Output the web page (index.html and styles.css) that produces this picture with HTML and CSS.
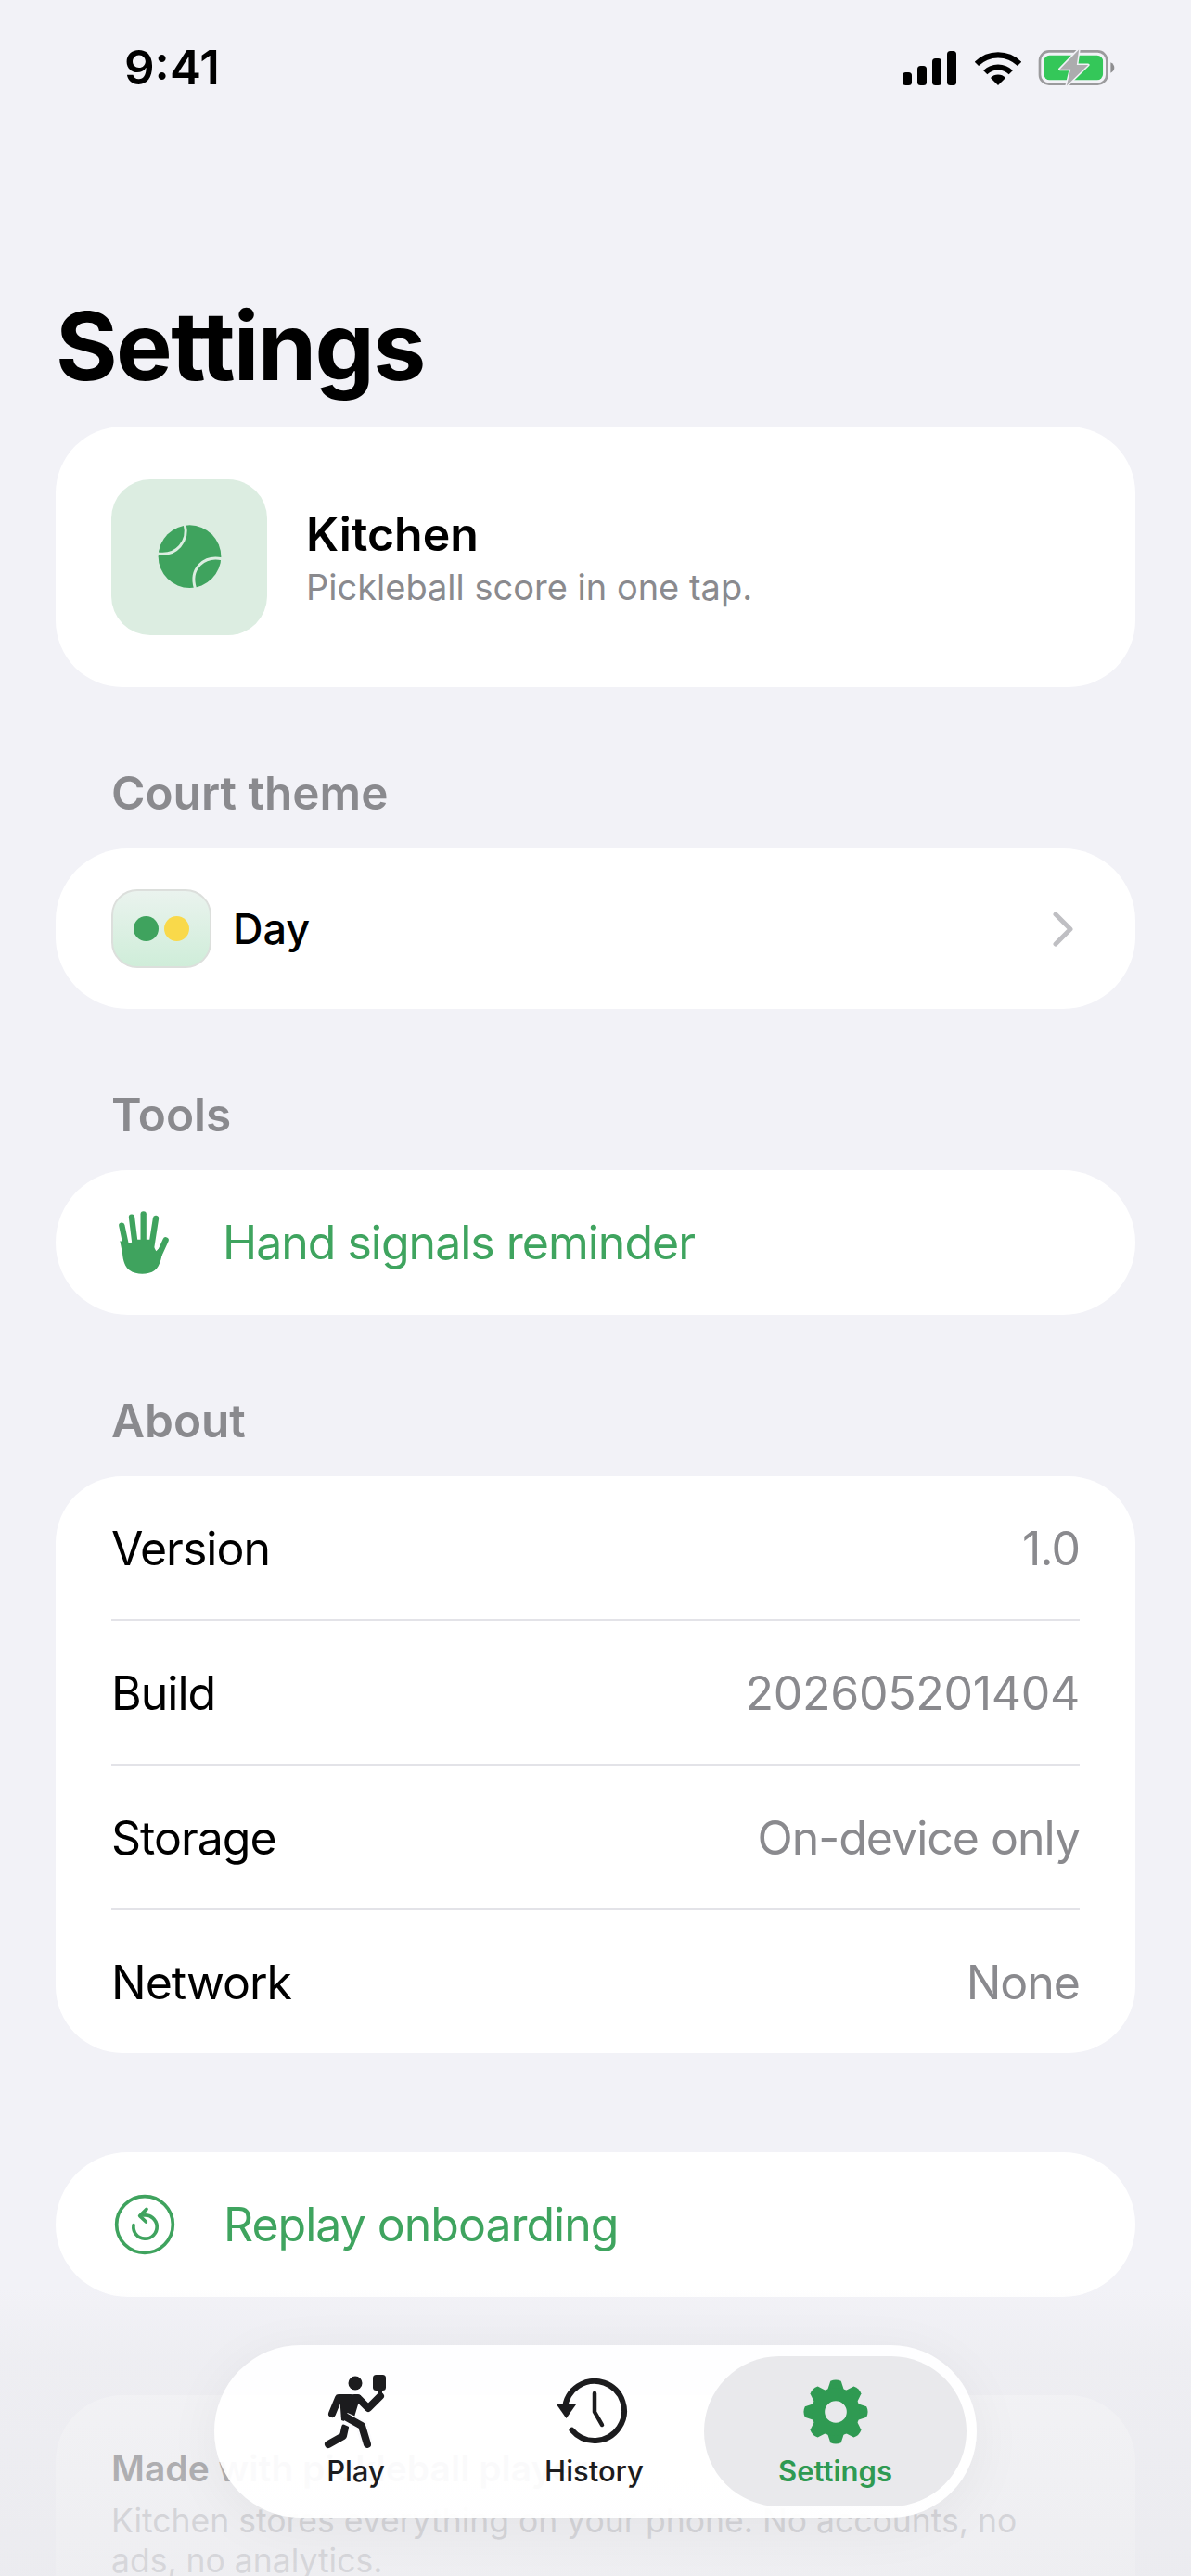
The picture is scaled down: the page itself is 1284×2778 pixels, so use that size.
FILE: index.html
```html
<!DOCTYPE html>
<html lang="en">
  <head>
    <meta charset="UTF-8" />
    <meta name="viewport" content="width=device-width, initial-scale=1.0" />
    <title>Settings</title>
    <link rel="stylesheet" href="styles.css">
  </head>
  <body>
    <div class="screen">
      <!-- Status bar -->
      <div class="status-bar">
        <span class="time">9:41</span>
        <div class="status-icons">
          <svg class="signal" viewBox="0 0 58 37" width="58" height="37">
            <rect x="0" y="23" width="10" height="14" rx="3.5" />
            <rect x="16" y="16" width="10" height="21" rx="3.5" />
            <rect x="32" y="8" width="10" height="29" rx="3.5" />
            <rect x="48" y="0" width="10" height="37" rx="3.5" />
          </svg>
          <svg class="wifi" viewBox="332 72 148 110" width="50" height="37">
            <path d="M337.4 113.4A97 97 0 0 1 474.6 113.4" fill="none" stroke="#000" stroke-width="18" />
            <path d="M365 141A58 58 0 0 1 447 141" fill="none" stroke="#000" stroke-width="18" />
            <path d="M406 182L382 158A34 34 0 0 1 430 158Z" />
          </svg>
          <svg class="battery" viewBox="539 64 250 126" width="83" height="42">
            <rect x="545" y="74" width="218" height="106" rx="30" fill="none" stroke="#9b9b9d" stroke-width="8" />
            <rect x="558" y="87" width="192" height="80" rx="19" fill="#34c759" />
            <path d="M775 110C783 114 787 120 787 127C787 134 783 140 775 144Z" fill="#8e8e90" />
            <path d="M672 68L610 132H645L632 186L702 118H665Z" fill="#acacae" stroke="#f2f2f7" stroke-width="9" stroke-linejoin="round" paint-order="stroke" />
          </svg>
        </div>
      </div>

      <h1 class="page-title">Settings</h1>

      <div class="card app-card">
        <div class="app-icon">
          <svg viewBox="385 376 214 214" width="71" height="71">
            <circle cx="492" cy="482" r="102" fill="#3fa35e" />
            <path d="M476 378C490 430 450 482 388 472" fill="none" stroke="#dcede1" stroke-width="9" />
            <path d="M597 490C540 478 490 520 510 586" fill="none" stroke="#dcede1" stroke-width="9" />
          </svg>
        </div>
        <div class="app-text">
          <div class="app-name">Kitchen</div>
          <div class="app-tagline">Pickleball score in one tap.</div>
        </div>
      </div>

      <div class="section-label">Court theme</div>
      <div class="card theme-row">
        <div class="swatch">
          <span class="dot dot-green"></span>
          <span class="dot dot-yellow"></span>
        </div>
        <span class="theme-name">Day</span>
        <svg class="chevron" viewBox="0 0 24 38" width="24" height="38">
          <path d="M4 3L20 19L4 35" fill="none" stroke="#bfbfc3" stroke-width="5" stroke-linecap="round" stroke-linejoin="round" />
        </svg>
      </div>

      <div class="section-label">Tools</div>
      <div class="card action-row hand-row">
        <svg viewBox="258 102 180 219" width="60" height="73">
          <g fill="none" stroke="#3fa35e" stroke-width="19" stroke-linecap="round">
            <path d="M274 155L292 240" />
            <path d="M306 128L318 225" />
            <path d="M344 118V220" />
            <path d="M384 132L368 235" />
            <path d="M416 202L385 270" />
          </g>
          <path d="M268 205L300 212L322 200H365L385 238L408 215C405 250 400 285 380 300C360 315 320 315 300 300C285 290 278 270 276 245Z" fill="#3fa35e" />
        </svg>
        <span>Hand signals reminder</span>
      </div>

      <div class="section-label">About</div>
      <div class="card about-card">
        <div class="about-row"><span>Version</span><span class="about-value">1.0</span></div>
        <div class="about-row"><span>Build</span><span class="about-value about-digits">202605201404</span></div>
        <div class="about-row"><span>Storage</span><span class="about-value">On-device only</span></div>
        <div class="about-row"><span>Network</span><span class="about-value">None</span></div>
      </div>

      <div class="card action-row replay-row">
        <svg viewBox="250 199 198 198" width="66" height="66">
          <circle cx="349" cy="298" r="91" fill="none" stroke="#3fa35e" stroke-width="11" />
          <path d="M313 300A38 38 0 1 0 345 268" fill="none" stroke="#3fa35e" stroke-width="11" stroke-linecap="round" />
          <path d="M355 248L333 270L353 289" fill="none" stroke="#3fa35e" stroke-width="11" stroke-linecap="round" stroke-linejoin="round" />
        </svg>
        <span>Replay onboarding</span>
      </div>

      <div class="card note-card">
        <div class="note-title">Made with pickleball players</div>
        <div class="note-text">Kitchen stores everything on your phone. No accounts, no ads, no analytics.</div>
      </div>

      <!-- Fade under the tab bar -->
      <div class="bottom-fade"></div>

      <nav class="tab-bar">
        <div class="tab">
          <svg class="icon-play" viewBox="0 0 72 86" width="72" height="86">
            <circle cx="35" cy="12" r="7.5" fill="#1c1c1e" />
            <rect x="54" y="3" width="14" height="17" rx="3.5" fill="#1c1c1e" />
            <g fill="none" stroke="#1c1c1e" stroke-width="8" stroke-linecap="round" stroke-linejoin="round">
              <path d="M30 28H17L10 45" />
              <path d="M34 28H38L49 39L62 26" />
              <path d="M24 60L22 69L6 78" />
            </g>
            <path d="M62 18V26" stroke="#1c1c1e" stroke-width="4" />
            <path d="M18 25H41L35 45L32 56L20 52Z" fill="#1c1c1e" />
            <path d="M24 50L42 58L48 79" fill="none" stroke="#fbfbfd" stroke-width="13" />
            <path d="M24 48L42 58L48 78" fill="none" stroke="#1c1c1e" stroke-width="8" stroke-linecap="round" stroke-linejoin="round" />
          </svg>
          <span class="tab-label">Play</span>
        </div>
        <div class="tab">
          <svg viewBox="0 -2 88 76" width="88" height="76">
            <path d="M12 32A32 32 0 1 1 19.5 54.6" fill="none" stroke="#1c1c1e" stroke-width="6" stroke-linecap="round" />
            <path d="M3 27H24L13.5 42Z" fill="#1c1c1e" />
            <path d="M44 15V35L52 49" fill="none" stroke="#1c1c1e" stroke-width="4.5" stroke-linecap="round" stroke-linejoin="round" />
          </svg>
          <span class="tab-label">History</span>
        </div>
        <div class="tab tab-active">
          <svg class="icon-gear" viewBox="-38 -38 76 76" width="72" height="72">
            <g fill="#2f9a52">
              <path d="M-10 -23L-6 -35Q0 -38 6 -35L10 -23Z" />
              <path d="M-10 -23L-6 -35Q0 -38 6 -35L10 -23Z" transform="rotate(45)" />
              <path d="M-10 -23L-6 -35Q0 -38 6 -35L10 -23Z" transform="rotate(90)" />
              <path d="M-10 -23L-6 -35Q0 -38 6 -35L10 -23Z" transform="rotate(135)" />
              <path d="M-10 -23L-6 -35Q0 -38 6 -35L10 -23Z" transform="rotate(180)" />
              <path d="M-10 -23L-6 -35Q0 -38 6 -35L10 -23Z" transform="rotate(225)" />
              <path d="M-10 -23L-6 -35Q0 -38 6 -35L10 -23Z" transform="rotate(270)" />
              <path d="M-10 -23L-6 -35Q0 -38 6 -35L10 -23Z" transform="rotate(315)" />
            </g>
            <circle r="20" fill="none" stroke="#2f9a52" stroke-width="15" />
          </svg>
          <span class="tab-label">Settings</span>
        </div>
      </nav>
    </div>
  </body>
</html>
```

FILE: styles.css
```css
* {
  box-sizing: border-box;
}

body {
  margin: 0;
  background-color: #f2f2f7;
  font-family: Inter, "Noto Sans", sans-serif;
  color: #000;
}

.screen {
  position: relative;
  width: 1284px;
  height: 2778px;
  overflow: hidden;
  padding: 0 60px;
  background-color: #f2f2f7;
}

.status-bar {
  display: flex;
  justify-content: space-between;
  align-items: center;
  height: 42px;
  margin-top: 52px;
  padding: 0 22px 0 74px;
}

.time {
  font-size: 51px;
  font-weight: 600;
  line-height: 42px;
}

.status-icons {
  display: flex;
  align-items: center;
  gap: 18px;
}

.signal {
  margin-right: 2px;
}

.page-title {
  margin: 219px 0 27px;
  font-size: 102px;
  font-weight: 700;
  line-height: 120px;
  letter-spacing: -1.7px;
}

.card {
  background-color: #fff;
  border-radius: 72px;
}

.app-card {
  display: flex;
  align-items: center;
  gap: 42px;
  height: 281px;
  padding: 0 60px;
}

.app-icon {
  display: flex;
  align-items: center;
  justify-content: center;
  width: 168px;
  height: 168px;
  border-radius: 42px;
  background-color: #dcede1;
}

.app-name {
  font-size: 50px;
  font-weight: 600;
  line-height: 60px;
}

.app-tagline {
  margin-top: 4px;
  font-size: 38px;
  line-height: 46px;
  color: #8a8a8e;
}

.section-label {
  margin: 84px 60px 30px;
  font-size: 49.5px;
  font-weight: 600;
  line-height: 60px;
  color: #8a8a8e;
}

.theme-row {
  display: flex;
  align-items: center;
  height: 173px;
  padding: 0 66px 0 60px;
  border-radius: 78px;
}

.swatch {
  display: flex;
  align-items: center;
  justify-content: center;
  gap: 6px;
  width: 108px;
  height: 85px;
  border: 2px solid #dcdfdc;
  border-radius: 28px;
  background: linear-gradient(#eaf3ee, #cfedd9);
}

.dot {
  width: 27px;
  height: 27px;
  border-radius: 50%;
}

.dot-green {
  background-color: #3fa35e;
}

.dot-yellow {
  background-color: #f9d94a;
}

.theme-name {
  flex: 1;
  margin-left: 23px;
  font-size: 45px;
  font-weight: 500;
}

.action-row {
  display: flex;
  align-items: center;
  height: 156px;
  border-radius: 78px;
  font-size: 50px;
  letter-spacing: -1px;
  color: #3fa45f;
}

.hand-row {
  padding-left: 66px;
  gap: 54px;
}

.replay-row {
  margin-top: 107px;
  padding-left: 63px;
  gap: 52px;
}

.about-card {
  padding: 0 60px;
}

.about-row {
  display: flex;
  justify-content: space-between;
  align-items: center;
  height: 156px;
  padding-top: 2px;
  border-bottom: 2px solid #e3e3e8;
  font-size: 50px;
  letter-spacing: -1px;
}

.about-row:last-child {
  height: 154px;
  border-bottom: none;
}

.about-value {
  color: #8a8a8e;
}

.about-digits {
  letter-spacing: -0.3px;
}

.note-card {
  height: 400px;
  margin-top: 106px;
  padding: 55px 60px 0;
}

.note-title {
  font-size: 39px;
  font-weight: 600;
  line-height: 48px;
  color: #000;
}

.note-text {
  margin-top: 11px;
  font-size: 35.5px;
  line-height: 43px;
  color: #8a8a8e;
}

.bottom-fade {
  position: absolute;
  left: 0;
  right: 0;
  bottom: 0;
  height: 310px;
  background: linear-gradient(rgba(235, 235, 239, 0), rgba(236, 236, 240, 0.68) 24%, rgba(234, 234, 238, 0.8));
}

.tab-bar {
  position: absolute;
  left: 231px;
  top: 2529px;
  display: flex;
  width: 822px;
  height: 186px;
  padding: 12px 11px 12px 24px;
  border-radius: 93px;
  background-color: rgba(255, 255, 255, 0.94);
  box-shadow: 0 10px 60px rgba(0, 0, 0, 0.05);
}

.tab {
  flex: 0 0 257px;
  display: flex;
  flex-direction: column;
  align-items: center;
  justify-content: flex-end;
  padding-bottom: 19px;
  border-radius: 81px;
}

.tab-active {
  flex: 0 0 283px;
  margin-left: -10px;
  background-color: #e9e9ec;
}

.tab svg {
  flex: none;
}

.icon-play {
  margin-bottom: -4px;
}

.icon-gear {
  margin-bottom: 3px;
}

.tab-label {
  margin-top: 6px;
  font-size: 31px;
  font-weight: 500;
  line-height: 38px;
  color: #1c1c1e;
}

.tab-active .tab-label {
  color: #2f9a52;
  font-weight: 600;
}
```
